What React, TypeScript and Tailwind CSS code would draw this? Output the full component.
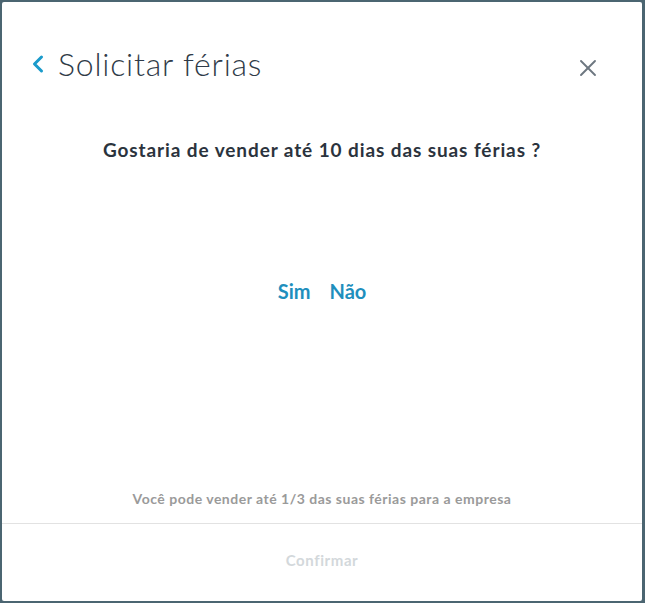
import { ChevronLeft, X } from "lucide-react";

const App = () => (
  <div className="w-[645px] h-[603px] bg-[#4b6571] p-[2px] font-['Lato',_'Noto_Sans',_sans-serif]">
    <div className="w-[640px] h-[599px] bg-white rounded-[2px] flex flex-col">
      <div className="h-[124px] flex items-center justify-between pl-[22px] pr-[40px]">
        <div className="flex items-center gap-[6px]">
          <ChevronLeft size={28} strokeWidth={2.6} className="text-[#1b9bcb]" />
          <h1 className="text-[32px] font-light text-[#2f3b48] leading-none tracking-[0.8px]">
            Solicitar férias
          </h1>
        </div>
        <button className="mt-[8px] text-[#6d7780]">
          <X size={28} strokeWidth={1.6} />
        </button>
      </div>

      <div className="h-[48px] flex items-center justify-center">
        <p className="text-[19px] font-bold text-[#2b333d] tracking-[0.9px]">
          Gostaria de vender até 10 dias das suas férias ?
        </p>
      </div>

      <div className="mt-[102px] h-[30px] flex items-center justify-center gap-[19px] text-[20px] font-bold text-[#1f8fbd]">
        <button>Sim</button>
        <button>Não</button>
      </div>

      <div className="flex-1"></div>

      <p className="h-[20px] flex items-center justify-center text-[14px] font-bold text-[#9a9a9a] tracking-[0.5px] mb-[15px]">
        Você pode vender até 1/3 das suas férias para a empresa
      </p>

      <div className="border-t border-[#e2e2e2] h-[78px] pb-[4px] flex items-center justify-center">
        <button className="text-[15px] font-bold text-[#d3d8db] tracking-[0.6px]">Confirmar</button>
      </div>
    </div>
  </div>
);

export default App;
